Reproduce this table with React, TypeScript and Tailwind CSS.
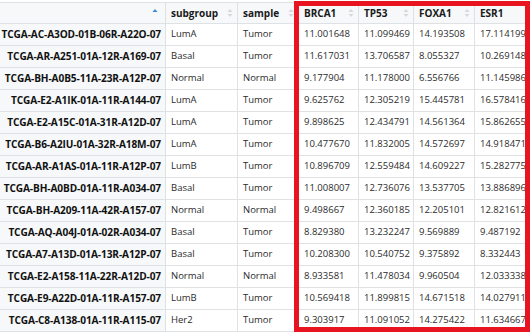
import React from 'react';

type Row = {
  id: string;
  subgroup: string;
  sample: string;
  brca1: string;
  tp53: string;
  foxa1: string;
  esr1: string;
};

const ROWS: Row[] = [
  { id: 'TCGA-AC-A3OD-01B-06R-A22O-07', subgroup: 'LumA', sample: 'Tumor', brca1: '11.001648', tp53: '11.099469', foxa1: '14.193508', esr1: '17.114199' },
  { id: 'TCGA-AR-A251-01A-12R-A169-07', subgroup: 'Basal', sample: 'Tumor', brca1: '11.617031', tp53: '13.706587', foxa1: '8.055327', esr1: '10.269148' },
  { id: 'TCGA-BH-A0B5-11A-23R-A12P-07', subgroup: 'Normal', sample: 'Normal', brca1: '9.177904', tp53: '11.178000', foxa1: '6.556766', esr1: '11.145986' },
  { id: 'TCGA-E2-A1IK-01A-11R-A144-07', subgroup: 'LumA', sample: 'Tumor', brca1: '9.625762', tp53: '12.305219', foxa1: '15.445781', esr1: '16.578416' },
  { id: 'TCGA-E2-A15C-01A-31R-A12D-07', subgroup: 'LumA', sample: 'Tumor', brca1: '9.898625', tp53: '12.434791', foxa1: '14.561364', esr1: '15.862655' },
  { id: 'TCGA-B6-A2IU-01A-32R-A18M-07', subgroup: 'LumA', sample: 'Tumor', brca1: '10.477670', tp53: '11.832005', foxa1: '14.572697', esr1: '14.918471' },
  { id: 'TCGA-AR-A1AS-01A-11R-A12P-07', subgroup: 'LumB', sample: 'Tumor', brca1: '10.896709', tp53: '12.559484', foxa1: '14.609227', esr1: '15.282775' },
  { id: 'TCGA-BH-A0BD-01A-11R-A034-07', subgroup: 'Basal', sample: 'Tumor', brca1: '11.008007', tp53: '12.736076', foxa1: '13.537705', esr1: '13.886896' },
  { id: 'TCGA-BH-A209-11A-42R-A157-07', subgroup: 'Normal', sample: 'Normal', brca1: '9.498667', tp53: '12.360185', foxa1: '12.205101', esr1: '12.821612' },
  { id: 'TCGA-AQ-A04J-01A-02R-A034-07', subgroup: 'Basal', sample: 'Tumor', brca1: '8.829380', tp53: '13.232247', foxa1: '9.569889', esr1: '9.487192' },
  { id: 'TCGA-A7-A13D-01A-13R-A12P-07', subgroup: 'Basal', sample: 'Tumor', brca1: '10.208300', tp53: '10.540752', foxa1: '9.375892', esr1: '8.332443' },
  { id: 'TCGA-E2-A158-11A-22R-A12D-07', subgroup: 'Normal', sample: 'Normal', brca1: '8.933581', tp53: '11.478034', foxa1: '9.960504', esr1: '12.033338' },
  { id: 'TCGA-E9-A22D-01A-11R-A157-07', subgroup: 'LumB', sample: 'Tumor', brca1: '10.569418', tp53: '11.899815', foxa1: '14.671518', esr1: '14.027911' },
  { id: 'TCGA-C8-A138-01A-11R-A115-07', subgroup: 'Her2', sample: 'Tumor', brca1: '9.303917', tp53: '11.091052', foxa1: '14.275422', esr1: '11.634667' },
];

// sort arrows in the header cells
const SortIcon: React.FC<{ active?: boolean }> = ({ active }) => (
  <svg width="6" height="10" viewBox="0 0 6 10" className="shrink-0">
    <path d="M3 1 L5.5 4 L0.5 4 Z" fill={active ? '#3b8ad9' : '#d6d9dc'} />
    {!active && <path d="M3 9 L5.5 6 L0.5 6 Z" fill="#d6d9dc" />}
  </svg>
);

const HeadCell: React.FC<{ label?: string; width: string; active?: boolean }> = ({ label, width, active }) => (
  <div className={`${width} shrink-0 flex items-center justify-between pl-[5px] pr-[4px] border-r border-[#dfe2e5]`}>
    <span className="font-bold text-[10px] text-[#1a1a1a]">{label}</span>
    <SortIcon active={active} />
  </div>
);

const Cell: React.FC<{ children: React.ReactNode; width: string }> = ({ children, width }) => (
  <div className={`${width} shrink-0 flex items-center pl-[5px] border-r border-[#dfe2e5] whitespace-nowrap overflow-hidden`}>
    {children}
  </div>
);

const App: React.FC = () => {
  return (
    <div className="relative w-[530px] h-[332px] overflow-hidden bg-white text-[9.5px] text-[#2b2b2b] font-['Open_Sans',sans-serif]">
      <div className="w-[640px] pt-[2px]">
        <div className="flex h-[22px] bg-[#f6f8f9] border-t border-b border-[#dfe2e5]">
          <div className="w-[166px] shrink-0 flex items-center justify-end pr-[7px] border-r border-[#dfe2e5]">
            <SortIcon active />
          </div>
          <HeadCell label="subgroup" width="w-[72px]" />
          <HeadCell label="sample" width="w-[61px]" />
          <HeadCell label="BRCA1" width="w-[60px]" />
          <HeadCell label="TP53" width="w-[55px]" />
          <HeadCell label="FOXA1" width="w-[61px]" />
          <HeadCell label="ESR1" width="w-[62px]" />
        </div>
        {ROWS.map(row => (
          <div key={row.id} className="flex h-[22px] border-b border-[#dfe2e5]">
            <div className="w-[166px] shrink-0 flex items-center justify-end pr-[4px] bg-[#f6f8f9] border-r border-[#dfe2e5] whitespace-nowrap font-bold text-[10.1px] tracking-[-0.1px] text-[#111]">
              {row.id}
            </div>
            <Cell width="w-[72px]">{row.subgroup}</Cell>
            <Cell width="w-[61px]">{row.sample}</Cell>
            <Cell width="w-[60px]">{row.brca1}</Cell>
            <Cell width="w-[55px]">{row.tp53}</Cell>
            <Cell width="w-[61px]">{row.foxa1}</Cell>
            <Cell width="w-[62px]">{row.esr1}</Cell>
          </div>
        ))}
      </div>
      {/* red highlight box drawn over the expression columns */}
      <div className="absolute left-[294px] top-[1px] w-[236px] h-[331px] border-[5px] border-[#e8141f] pointer-events-none" />
    </div>
  );
};

export default App;
